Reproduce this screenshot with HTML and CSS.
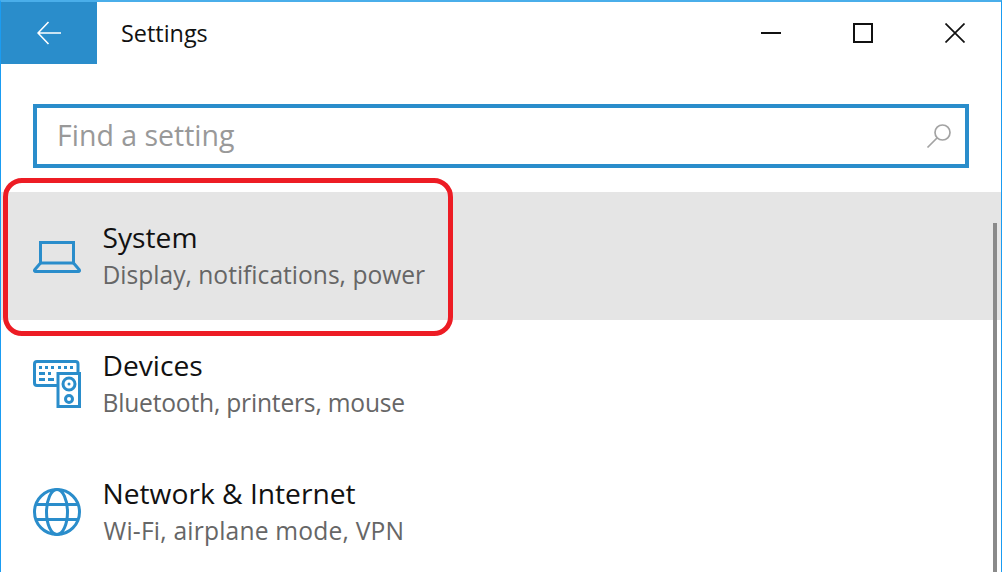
FILE: index.html
```html
<!DOCTYPE html>
<html lang="en">
<head>
<meta charset="utf-8">
<title>Settings</title>
<link rel="stylesheet" href="styles.css">
</head>
<body>
<div class="window">
  <header class="titlebar">
    <div class="back">
      <svg class="icon-back" width="24" height="24" viewBox="0 0 24 24"><path d="M11.5 1 L1 12 L11.5 23 M1 12 H24"/></svg>
    </div>
    <div class="title">Settings</div>
    <div class="controls">
      <div class="control"><svg width="20" height="20" viewBox="0 0 20 20"><path d="M0 10 H20"/></svg></div>
      <div class="control"><svg width="20" height="20" viewBox="0 0 20 20"><rect x="1" y="1" width="18" height="18"/></svg></div>
      <div class="control"><svg class="thin" width="20" height="20" viewBox="0 0 20 20"><path d="M0.5 0.5 L19.5 19.5 M19.5 0.5 L0.5 19.5"/></svg></div>
    </div>
  </header>
  <div class="search">
    <span class="placeholder">Find a setting</span>
    <svg class="icon-search" width="26" height="26" viewBox="0 0 26 26"><circle cx="16.5" cy="9.5" r="7.5"/><path d="M11 15 L1.5 24.5"/></svg>
  </div>
  <div class="list">
    <div class="row selected">
      <svg class="icon" width="48" height="48" viewBox="0 0 48 48"><rect x="7.5" y="10.5" width="33" height="20.5"/><path d="M7.5 31 L1.7 37.7 Q1 39.5 2.7 39.5 H45.3 Q47 39.5 46.3 37.7 L40.5 31"/></svg>
      <div class="text">
        <div class="name">System</div>
        <div class="desc">Display, notifications, power</div>
      </div>
    </div>
    <div class="row">
      <svg class="icon" width="48" height="48" viewBox="0 0 48 48">
        <path d="M24 25.5 H4 Q1.5 25.5 1.500 23 V4 Q1.500 1.500 4 1.500 H42.500 Q45 1.500 45 4 V12"/>
        <rect x="25" y="13.500" width="21.500" height="33"/>
        <circle cx="36" cy="24" r="6"/>
        <circle class="solid" cx="36" cy="24" r="1.500"/>
        <circle cx="36" cy="39" r="3.500"/>
        <g class="solid">
          <rect x="6" y="6" width="3" height="3"/><rect x="12" y="6" width="3" height="3"/><rect x="18" y="6" width="3" height="3"/><rect x="25" y="6" width="3" height="3"/><rect x="31" y="6" width="3" height="3"/><rect x="37" y="6" width="3" height="3"/>
          <rect x="6" y="12" width="6" height="3"/><rect x="15" y="12" width="3" height="3"/>
          <rect x="6" y="18" width="6" height="3"/><rect x="15" y="18" width="6" height="3"/>
        </g>
      </svg>
      <div class="text">
        <div class="name">Devices</div>
        <div class="desc narrow">Bluetooth, printers, mouse</div>
      </div>
    </div>
    <div class="row">
      <svg class="icon" width="48" height="48" viewBox="0 0 48 48"><circle cx="24" cy="24" r="22.500"/><ellipse cx="24" cy="24" rx="10.500" ry="22.500"/><path d="M3.500 16.500 H44.500 M3.500 31.500 H44.500"/></svg>
      <div class="text">
        <div class="name">Network &amp; Internet</div>
        <div class="desc wide">Wi-Fi, airplane mode, VPN</div>
      </div>
    </div>
  </div>
  <div class="scrollbar"></div>
</div>
<div class="callout"></div>
</body>
</html>
```
FILE: styles.css
```css
* { box-sizing: border-box; }
html, body { margin: 0; padding: 0; height: 572px; overflow: hidden; background: #fff; }
body { font-family: "Open Sans", "Noto Sans", sans-serif; position: relative; }
.window {
  position: relative;
  width: 1002px;
  height: 572px;
  border-top: 2px solid #4aaeea;
  border-left: 1px solid #1a9cf2;
  border-right: 1px solid #1a9cf2;
  overflow: hidden;
}
.titlebar { display: flex; align-items: stretch; height: 62px; }
.back { width: 96px; background: #2a8dcb; display: flex; align-items: center; justify-content: center; }
.icon-back path { fill: none; stroke: #fff; stroke-width: 1.6; }
.title { margin-left: 24px; font-size: 23.400px; line-height: 62px; color: #111; flex: 1; }
.controls { display: flex; }
.control { width: 92px; display: flex; align-items: center; justify-content: center; }
.control svg path, .control svg rect { fill: none; stroke: #111; stroke-width: 2; }
.control svg.thin path { stroke-width: 1.7; }
.search {
  margin: 40px 32px 0 32px;
  width: 936px;
  height: 64px;
  border: 4px solid #2a8dcb;
  display: flex;
  align-items: center;
  justify-content: space-between;
  padding: 0 13px 2px 20px;
}
.placeholder { font-size: 28.500px; color: #999; }
.icon-search { margin-top: 2px; }
.icon-search circle, .icon-search path { fill: none; stroke: #a3a3a3; stroke-width: 1.7; }
.list { margin-top: 24px; }
.row { height: 128px; display: flex; align-items: center; padding-left: 32px; gap: 21.500px; }
.row.selected { background: #e5e5e5; }
.icon * { fill: none; stroke: #2a8dcb; stroke-width: 3; }
.icon .solid, .icon .solid * { fill: #2a8dcb; stroke: none; }
.name { font-size: 28.200px; line-height: 36px; color: #111; }
.desc { font-size: 24.600px; line-height: 36px; color: #666; margin-top: 2px; }
.desc.narrow { letter-spacing: -0.200px; }
.desc.wide { letter-spacing: 0.200px; margin-left: 1px; }
.scrollbar { position: absolute; left: 992px; top: 221px; width: 4px; bottom: 0; background: #8a8a8a; }
.callout {
  position: absolute;
  left: 3px;
  top: 178px;
  width: 450px;
  height: 158px;
  border: 5px solid #ed1c24;
  border-radius: 19px;
}
```
